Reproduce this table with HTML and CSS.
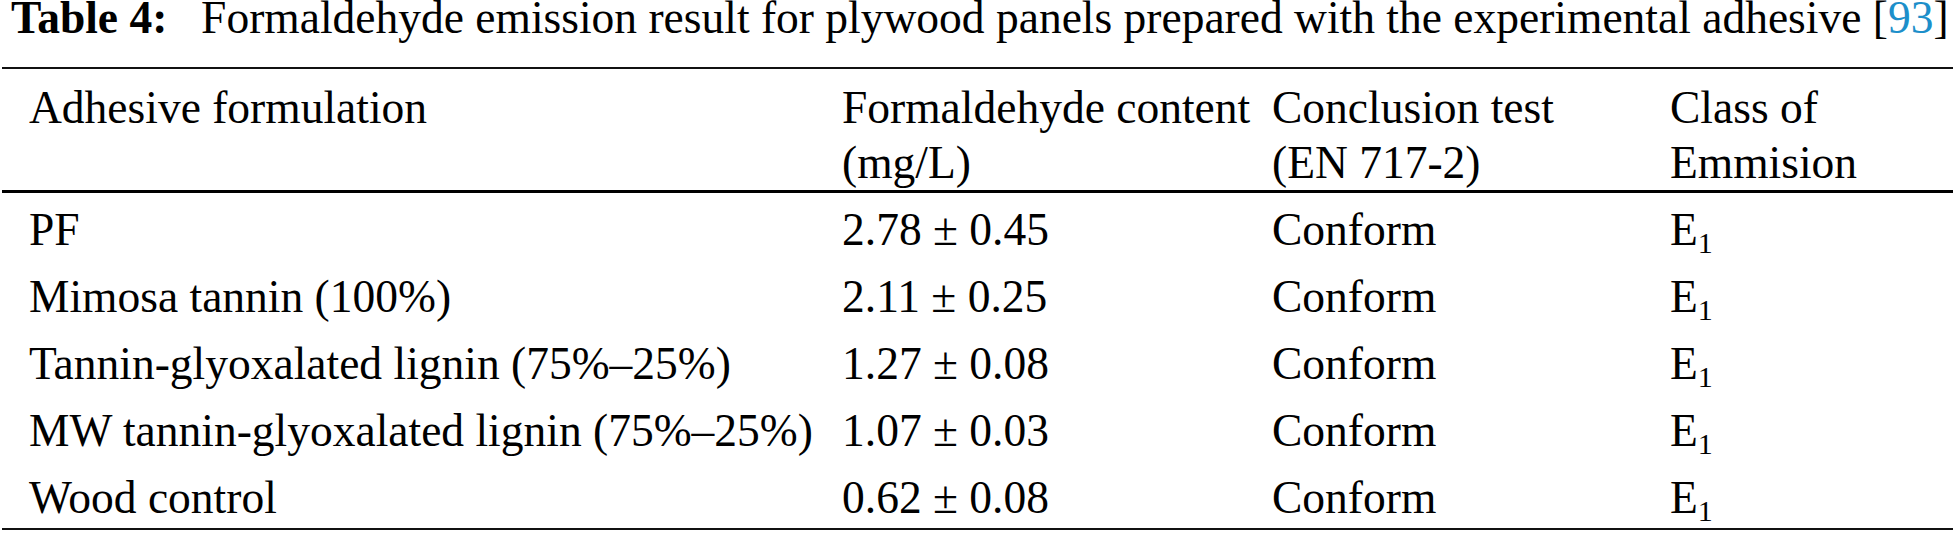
FILE: index.html
```html
<!DOCTYPE html>
<html lang="en">
<head>
    <meta charset="UTF-8">
    <meta name="viewport" content="width=device-width, initial-scale=1.0">
    <title>Table 4</title>
    <link rel="stylesheet" href="styles.css">
</head>
<body>
    <div class="caption"><b>Table 4:</b>&ensp;Formaldehyde emission result for plywood panels prepared with the experimental adhesive [<a class="ref" href="#">93</a>]</div>
    <table class="data-table">
        <thead>
            <tr>
                <th class="col-name">Adhesive formulation</th>
                <th class="col-value">Formaldehyde content<br>(mg/L)</th>
                <th class="col-test">Conclusion test<br>(EN 717-2)</th>
                <th class="col-class">Class of<br>Emmision</th>
            </tr>
        </thead>
        <tbody>
            <tr>
                <td>PF</td>
                <td>2.78 ± 0.45</td>
                <td>Conform</td>
                <td>E<sub>1</sub></td>
            </tr>
            <tr>
                <td>Mimosa tannin (100%)</td>
                <td>2.11 ± 0.25</td>
                <td>Conform</td>
                <td>E<sub>1</sub></td>
            </tr>
            <tr>
                <td>Tannin-glyoxalated lignin (75%–25%)</td>
                <td>1.27 ± 0.08</td>
                <td>Conform</td>
                <td>E<sub>1</sub></td>
            </tr>
            <tr>
                <td>MW tannin-glyoxalated lignin (75%–25%)</td>
                <td>1.07 ± 0.03</td>
                <td>Conform</td>
                <td>E<sub>1</sub></td>
            </tr>
            <tr>
                <td>Wood control</td>
                <td>0.62 ± 0.08</td>
                <td>Conform</td>
                <td>E<sub>1</sub></td>
            </tr>
        </tbody>
    </table>
</body>
</html>
```

FILE: styles.css
```css
body {
    margin: 0;
    background-color: #fff;
    color: #000;
    font-family: 'Liberation Serif', 'Times New Roman', serif;
    font-size: 45.5px;
}
.caption {
    line-height: 36px;
    padding-left: 11px;
    margin-bottom: 31px;
    white-space: nowrap;
}
.caption b {
    margin-right: 11px;
}
.ref {
    color: #1d8fca;
    text-decoration: none;
}
.data-table {
    margin-left: 2px;
    width: 1951px;
    table-layout: fixed;
    border-collapse: separate;
    border-spacing: 0;
    border-top: 2px solid #111;
    border-bottom: 2px solid #111;
}
.data-table th,
.data-table td {
    font-weight: normal;
    text-align: left;
    vertical-align: top;
    line-height: 52px;
    padding: 0;
    white-space: nowrap;
}
.data-table th {
    line-height: 55px;
    padding-top: 11px;
    padding-bottom: 0;
    border-bottom: 3px solid #000;
}
.data-table td {
    padding-top: 11px;
    padding-bottom: 4px;
}
.data-table th:first-child,
.data-table td:first-child {
    padding-left: 27px;
}
.col-name { width: 813px; }   /* 840 incl. padding */
.col-value { width: 430px; }
.col-test { width: 398px; }
sub {
    font-size: 0.66em;
    line-height: 0;
    vertical-align: -8px;
}
```
